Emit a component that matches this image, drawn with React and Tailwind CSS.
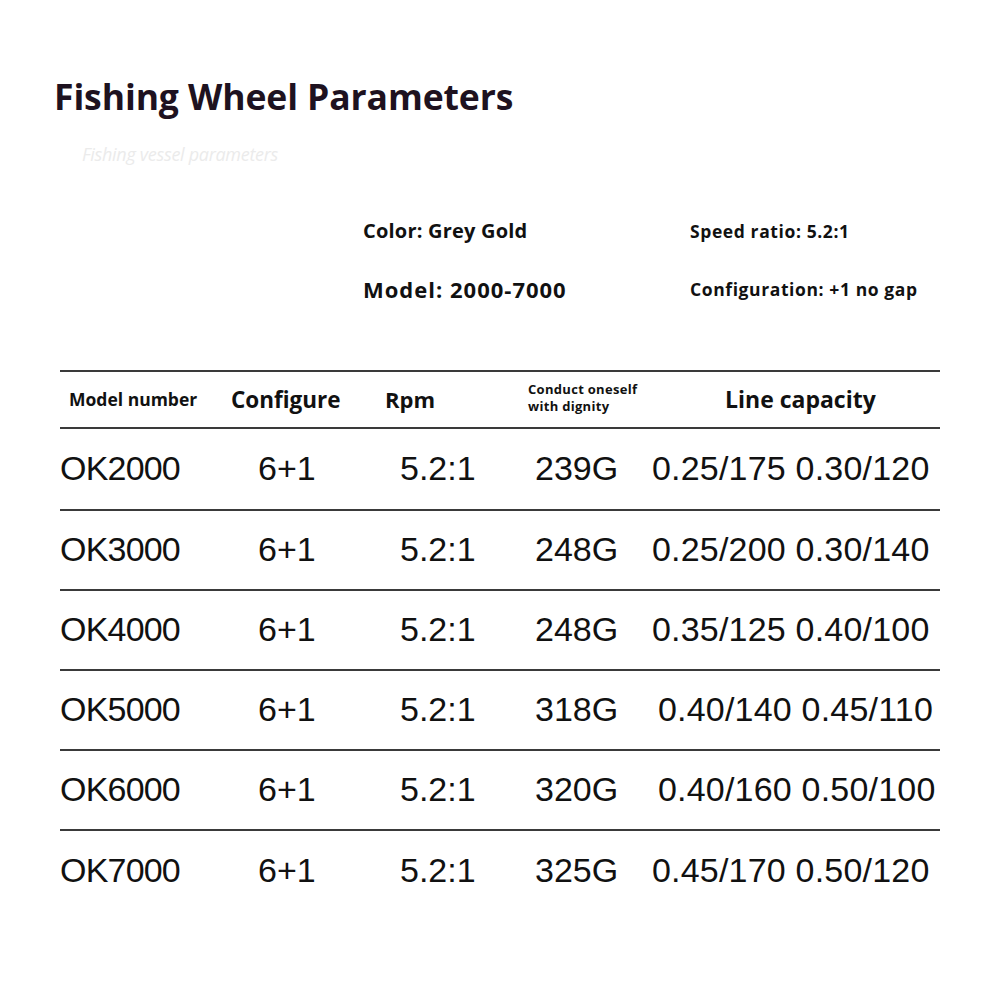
export default function App() {
  const rows = [
    ["OK2000", "239G", "0.25/175 0.30/120", false],
    ["OK3000", "248G", "0.25/200 0.30/140", false],
    ["OK4000", "248G", "0.35/125 0.40/100", false],
    ["OK5000", "318G", "0.40/140 0.45/110", true],
    ["OK6000", "320G", "0.40/160 0.50/100", true],
    ["OK7000", "325G", "0.45/170 0.50/120", false],
  ];
  const sans = { fontFamily: '"Open Sans", "Liberation Sans", sans-serif' };
  return (
    <div className="w-[1000px] h-[1000px] bg-white overflow-hidden" style={sans}>
      <div className="pt-[72px] pl-[54px]">
        <h1 className="text-[35.5px] leading-[48px] font-bold text-[#1e1220] tracking-[-0.1px]">Fishing Wheel Parameters</h1>
        <div className="pl-[28px] mt-[22px] text-[18px] italic text-[#ebebeb] leading-[24px] tracking-[-0.3px]">Fishing vessel parameters</div>
      </div>
      <div className="grid grid-cols-[327px_1fr] ml-[363px] mt-[50px] text-[#111]">
        <div className="flex flex-col">
          <div className="h-[30px] text-[20px] font-bold leading-[30px] tracking-[0.2px]">Color: Grey Gold</div>
          <div className="h-[30px] mt-[28px] text-[22px] font-bold leading-[30px] tracking-[1px]">Model: 2000-7000</div>
        </div>
        <div className="flex flex-col">
          <div className="h-[30px] text-[17.5px] font-bold leading-[30px] tracking-[0.6px]">Speed ratio: 5.2:1</div>
          <div className="h-[30px] mt-[28px] text-[17.5px] font-bold leading-[30px] tracking-[0.6px]">Configuration: +1 no gap</div>
        </div>
      </div>
      <div className="ml-[60px] mr-[60px] mt-[66px] text-[#111]">
        <div className="grid grid-cols-[171px_154px_143px_124px_1fr] items-center h-[59px] border-t-2 border-b-2 border-[#3a3a3a] font-bold">
          <div className="pl-[9px] text-[17.5px]">Model number</div>
          <div className="text-[22.5px]">Configure</div>
          <div className="text-[22px]">Rpm</div>
          <div className="text-[13px] leading-[17px] -mt-[4px] tracking-[0.3px]">Conduct oneself<br />with dignity</div>
          <div className="pl-[73px] text-[23px]">Line capacity</div>
        </div>
        {rows.map(([m, w, cap, shift], i) => (
          <div
            key={m}
            className={`grid grid-cols-[171px_154px_143px_124px_1fr] items-center ${i === 0 ? "h-[82px]" : "h-[80px]"} ${i < rows.length - 1 ? "border-b-2 border-[#3a3a3a]" : ""} text-[34px] leading-[40px] text-[#111]`}
            style={{ fontFamily: '"Liberation Sans", Arial, sans-serif' }}
          >
            <div className="-mt-[2px] -tracking-[0.8px]">{m}</div>
            <div className="pl-[27px] -mt-[2px]">6+1</div>
            <div className="pl-[15px] -mt-[2px]">5.2:1</div>
            <div className="pl-[7px] -mt-[2px]">{w}</div>
            <div className={`${shift ? "pl-[6px]" : ""} -mt-[2px] whitespace-pre tracking-[0.2px]`}>{cap}</div>
          </div>
        ))}
      </div>
    </div>
  );
}
